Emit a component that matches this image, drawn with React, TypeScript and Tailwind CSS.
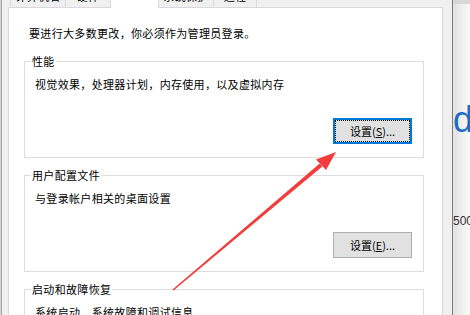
import React from 'react'

const cjk = "font-['Noto_Sans_CJK_SC','Noto_Sans',sans-serif]"

const Tab = ({ label, className }: { label: string; className: string }) => {
  return (
    <div className={`h-[8px] overflow-hidden border-b border-[#d9d9d9] bg-[#f0f0f0] text-center ${className}`}>
      <span className="-mt-[12px] block text-[11px] leading-[16px] tracking-[0.33px] text-black">
        {label}
      </span>
    </div>
  )
}

const SetButton = ({ hot, focused }: { hot: string; focused?: boolean }) => {
  return (
    <button
      className={`flex h-[26px] w-[79px] items-center justify-center bg-[#e1e1e1] text-[11px] leading-none text-black ${
        focused
          ? 'border-2 border-[#0078d7] outline-1 outline-offset-[-3px] outline-dotted outline-black'
          : 'border border-[#adadad]'
      }`}
    >
      设置(<span className="underline underline-offset-1">{hot}</span>)...
    </button>
  )
}

const Group = ({
  title,
  text,
  hot,
  focused,
  className,
}: {
  title: string
  text: string
  hot?: string
  focused?: boolean
  className: string
}) => {
  return (
    <fieldset className={`border border-[#dcdcdc] pb-[13px] ${className}`}>
      <legend className="ml-[6px] px-[1px] text-[11px] leading-[16px] tracking-[0.33px]">{title}</legend>
      <p className="mt-[7px] pl-[10px] text-[11px] leading-[16px] tracking-[0.33px]">{text}</p>
      {hot && (
        <div className="mt-[26px] flex justify-end pr-[11px]">
          <SetButton hot={hot} focused={focused} />
        </div>
      )}
    </fieldset>
  )
}

export default function App() {
  return (
    <div className={`relative flex h-[315px] w-[470px] overflow-hidden bg-[#f0f0f0] text-black ${cjk}`}>
      {/* left window edge */}
      <div className="flex w-[8px] shrink-0">
        <div className="w-[1px] bg-[#d4d4d4]"></div>
        <div className="w-[1px] bg-[#a3a3a3]"></div>
        <div className="flex-1 bg-[#f0f0f0]"></div>
      </div>

      {/* dialog body */}
      <div className="flex w-[435px] shrink-0 flex-col">
        <div className="flex h-[8px]">
          <div className="w-[2px] border-b border-[#d9d9d9]"></div>
          <Tab label="计算机名" className="w-[56px] border-x" />
          <Tab label="硬件" className="w-[45px] border-r" />
          <div className="w-[47px] bg-white"></div>
          <Tab label="系统保护" className="w-[56px] border-x" />
          <Tab label="远程" className="w-[43px] border-r" />
          <div className="flex-1 border-b border-[#d9d9d9]"></div>
        </div>
        <div className="flex-1 overflow-hidden border-x border-[#d9d9d9] bg-white pl-[15px] pr-[18px] pt-[17px]">
          <p className="pl-[5px] text-[11px] leading-[16px] tracking-[0.33px]">
            要进行大多数更改，你必须作为管理员登录。
          </p>
          <Group
            title="性能"
            text="视觉效果，处理器计划，内存使用，以及虚拟内存"
            hot="S"
            focused
            className="mt-[12px]"
          />
          <Group title="用户配置文件" text="与登录帐户相关的桌面设置" hot="E" className="mt-[9px]" />
          <Group title="启动和故障恢复" text="系统启动、系统故障和调试信息" className="mt-[9px]" />
        </div>
      </div>

      {/* right window edge */}
      <div className="w-[9px] shrink-0 bg-[#f0f0f0]"></div>
      <div className="w-[1px] shrink-0 bg-[#7d7d7d]"></div>

      {/* window behind */}
      <div className="flex w-[17px] shrink-0 flex-col overflow-hidden bg-gradient-to-r from-[#e2e2e2] to-[#fbfbfb] font-['Liberation_Sans',sans-serif]">
        <div className="h-[4px] bg-[#d8d8d8]"></div>
        <span className="mt-[98px] block whitespace-nowrap text-[36px] leading-none text-[#1a6fc4]">d</span>
        <span className="mt-[77px] block whitespace-nowrap text-[12px] leading-[12px] text-[#333]">500</span>
      </div>

      {/* red annotation arrow */}
      <svg className="pointer-events-none absolute inset-0" width="470" height="315" viewBox="0 0 470 315">
        <polygon points="173.5,290.5 172.5,289.5 319.7,163.5 322.3,166.5" fill="#f23b3b" />
        <polygon points="336,152 316,159.5 326,170" fill="#f23b3b" />
      </svg>
    </div>
  )
}
